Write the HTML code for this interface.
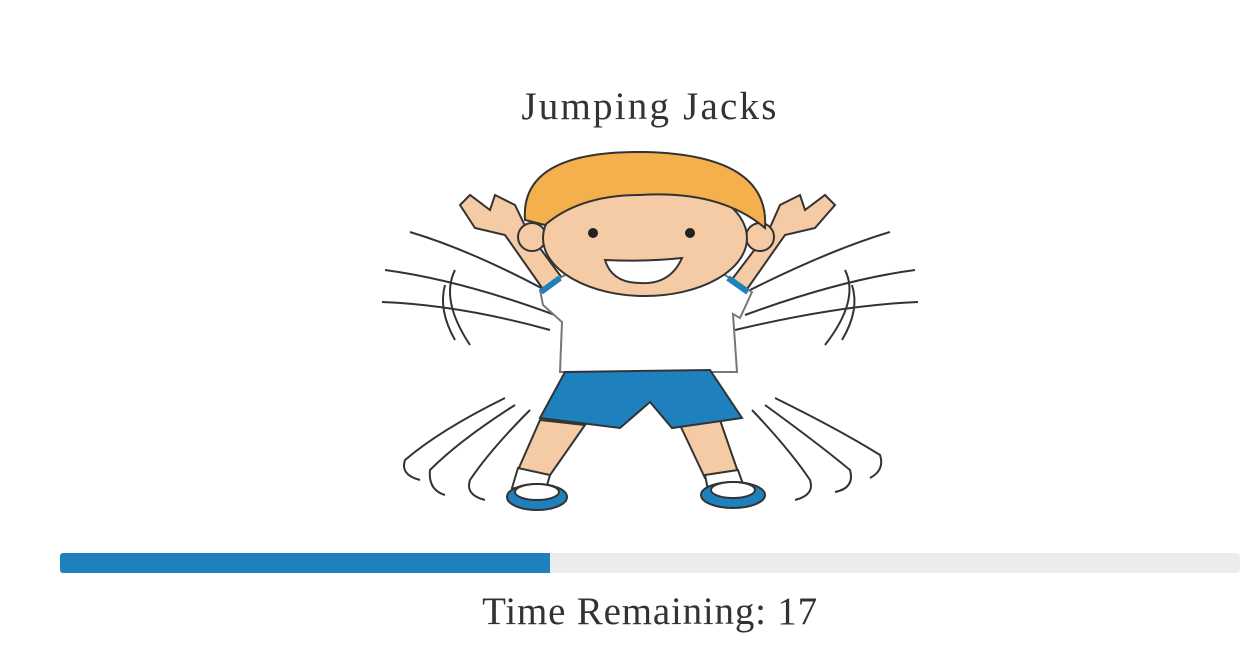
<!DOCTYPE html>
<html><head><style>
html,body{margin:0;padding:0;background:#fff;width:1257px;height:662px;overflow:hidden;position:relative;font-family:"Liberation Serif",serif;color:#333}
.t{position:absolute;left:0;width:1300px;text-align:center}
#title{top:84px;font-size:39px;letter-spacing:2.2px}
#time{top:589px;font-size:39px;letter-spacing:0.8px}
#bar{position:absolute;left:60px;top:553px;width:1180px;height:20px;border-radius:3px;background:#ececec;overflow:hidden}
#fill{width:490px;height:100%;background:#1e80bd}
</style></head><body>
<div class="t" id="title">Jumping Jacks</div>
<svg style="position:absolute;left:0;top:0" width="1257" height="662">
<g fill="none" stroke="#333" stroke-width="2">
<path d="M410,232 Q470,250 545,290"/><path d="M385,270 Q460,280 555,315"/><path d="M382,302 Q460,305 550,330"/>
<path d="M455,270 Q440,300 470,345"/><path d="M445,285 Q438,310 455,340"/>
<path d="M890,232 Q830,250 750,290"/><path d="M915,270 Q840,280 745,315"/><path d="M918,302 Q840,305 735,330"/>
<path d="M845,270 Q860,300 825,345"/><path d="M852,285 Q860,310 842,340"/>
<path d="M505,398 Q440,430 405,460 Q400,475 420,480"/><path d="M515,405 Q460,440 430,470 Q428,490 445,495"/><path d="M530,410 Q490,450 470,480 Q465,495 485,500"/>
<path d="M775,398 Q840,430 880,455 Q885,470 870,478"/><path d="M765,405 Q820,445 850,470 Q855,488 835,492"/><path d="M752,410 Q790,450 810,480 Q815,495 795,500"/>
</g>
<g stroke="#333" stroke-width="2">
<path d="M540,420 L518,470 L548,478 L585,425 Z" fill="#f4cba4"/>
<path d="M680,425 L705,478 L738,472 L720,420 Z" fill="#f4cba4"/>
<path d="M518,468 L512,488 L545,492 L550,475 Z" fill="#fff"/>
<path d="M705,475 L708,490 L745,490 L738,470 Z" fill="#fff"/>
<ellipse cx="537" cy="497" rx="30" ry="13" fill="#1e80bd"/>
<ellipse cx="733" cy="495" rx="32" ry="13" fill="#1e80bd"/>
<ellipse cx="537" cy="492" rx="22" ry="8" fill="#fff"/>
<ellipse cx="733" cy="490" rx="22" ry="8" fill="#fff"/>
<path d="M545,292 L505,235 L475,228 L460,205 L470,195 L490,210 L495,195 L515,205 L528,232 L565,282 Z" fill="#f4cba4"/>
<path d="M745,292 L785,235 L815,228 L835,205 L825,195 L805,210 L800,195 L780,205 L768,232 L730,282 Z" fill="#f4cba4"/>
<path d="M540,290 L570,272 L720,272 L752,292 L740,318 L733,314 L737,372 L560,372 L562,322 L543,305 Z" fill="#fff" stroke="#777"/>
<path d="M541,292 L560,278" stroke="#1e80bd" stroke-width="6"/><path d="M728,278 L748,292" stroke="#1e80bd" stroke-width="6"/>
<path d="M565,372 L710,370 L742,418 L672,428 L650,402 L620,428 L540,418 Z" fill="#1e80bd"/>
<circle cx="532" cy="237" r="14" fill="#f4cba4"/><circle cx="760" cy="237" r="14" fill="#f4cba4"/>
<ellipse cx="645" cy="238" rx="102" ry="58" fill="#f4cba4"/>
<path d="M525,220 Q520,150 645,152 Q770,155 765,228 Q720,190 640,195 Q580,195 545,225 Z" fill="#f5b04e"/>
<path d="M605,260 Q645,262 682,258 Q670,285 640,283 Q612,283 605,260 Z" fill="#fff"/>
</g>
<circle cx="593" cy="233" r="5" fill="#222"/><circle cx="690" cy="233" r="5" fill="#222"/>
</svg>
<div id="bar"><div id="fill"></div></div>
<div class="t" id="time">Time Remaining: 17</div>
</body></html>
